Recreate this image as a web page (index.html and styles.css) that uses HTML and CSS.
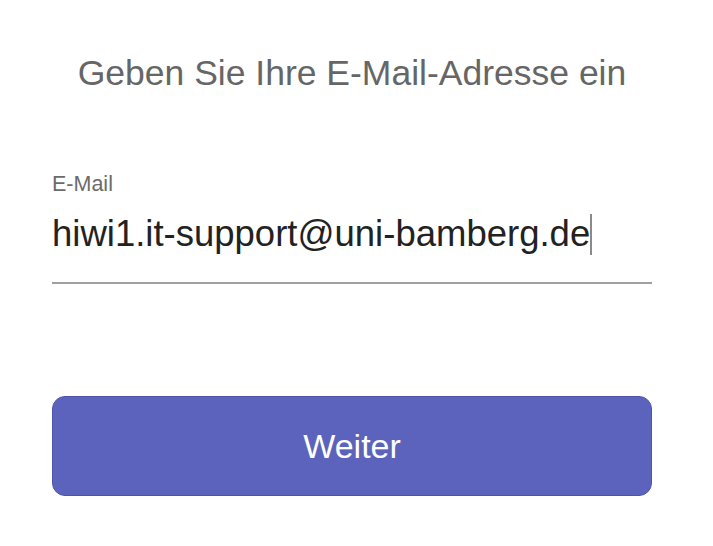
FILE: index.html
```html
<!DOCTYPE html>
<html lang="de">
<head>
<meta charset="utf-8">
<link rel="stylesheet" href="styles.css">
</head>
<body>
<main class="panel">
  <h1 class="title">Geben Sie Ihre E-Mail-Adresse ein</h1>
  <div class="field">
    <label class="label">E-Mail</label>
    <div class="input"><span class="value">hiwi1.it-support@uni-bamberg.de</span><span class="caret"></span></div>
  </div>
  <button class="btn">Weiter</button>
</main>
</body>
</html>
```
FILE: styles.css
```css
html, body {
  margin: 0;
  padding: 0;
  background: #ffffff;
}
body {
  font-family: "Liberation Sans", Arial, sans-serif;
  width: 713px;
  height: 546px;
  overflow: hidden;
}
.panel {
  display: flex;
  flex-direction: column;
  padding: 0 61px 0 52px;
}
.title {
  margin: 51px 0 0 0;
  font-weight: normal;
  font-size: 35.5px;
  line-height: 44px;
  color: #666666;
  text-align: center;
  white-space: nowrap;
}
.field {
  margin-top: 77px;
  display: flex;
  flex-direction: column;
}
.label {
  font-size: 21.5px;
  line-height: 24px;
  color: #6b6b6b;
}
.input {
  display: flex;
  align-items: center;
  height: 44px;
  padding-top: 16px;
  padding-bottom: 26px;
  border-bottom: 2px solid #a0a0a0;
}
.value {
  font-size: 36.5px;
  line-height: 44px;
  color: #222222;
  white-space: nowrap;
}
.caret {
  width: 2px;
  height: 41px;
  background: #8a8a8a;
  margin-left: 0;
}
.btn {
  margin-top: 112px;
  height: 100px;
  border: 1px solid #4c53a8;
  border-radius: 13px;
  background: #5b63bd;
  color: #ffffff;
  font-family: inherit;
  font-size: 34px;
  padding: 0;
}
```
